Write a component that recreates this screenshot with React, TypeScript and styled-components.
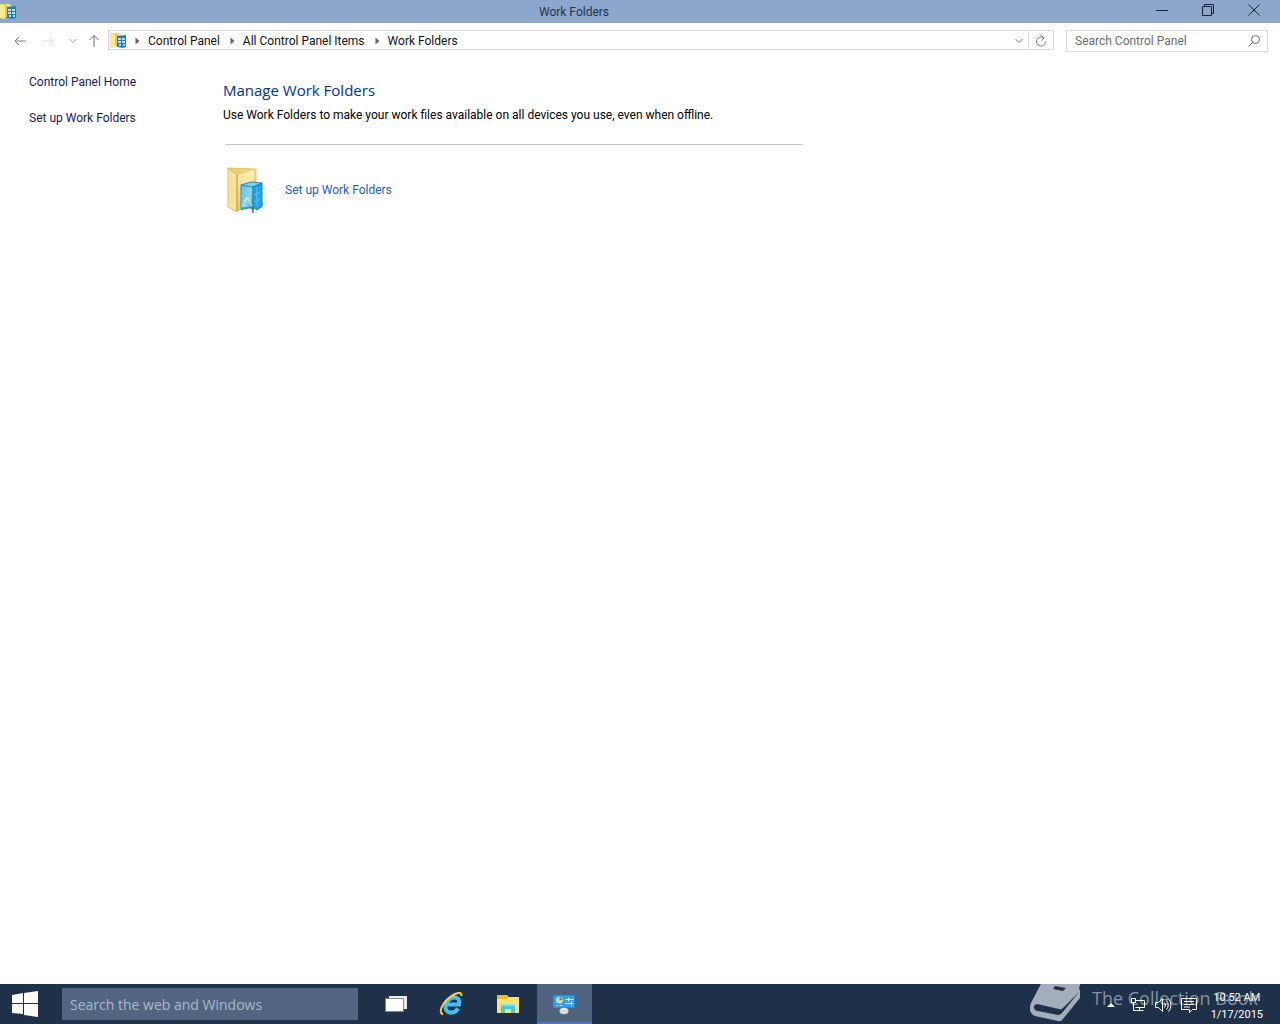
import React from "react";
import styled, { createGlobalStyle } from "styled-components";

const GlobalStyle = createGlobalStyle`
  * { box-sizing: border-box; }
  body { margin: 0; background: #fff; color: #111; font: 12px/16px Roboto, "Open Sans", sans-serif; }
  button, input { font: inherit; color: inherit; margin: 0; border-radius: 0; }
  button { padding: 0; border: 0; background: none; }
  svg { display: block; flex: none; }
`;

const display = `"Open Sans", "Noto Sans", sans-serif`;

const Desktop = styled.div`
  min-height: 100vh;
  display: flex;
  flex-direction: column;
`;

const TitleBar = styled.header`
  height: 23px;
  display: grid;
  grid-template-columns: 1fr auto 1fr;
  align-items: center;
  background: #8ca6cc;
  color: #24334d;
`;

const Title = styled.h1`
  margin: 0 132px 0 0;
  font-size: 12px;
  line-height: 16px;
  font-weight: 400;
`;

const WindowButtons = styled.div`
  display: flex;
  justify-content: flex-end;
  padding-right: 3px;
`;

const WindowButton = styled.button`
  width: 46px;
  height: 23px;
  display: grid;
  place-items: center;
  padding-bottom: 4px;
`;

const NavBar = styled.nav`
  display: flex;
  align-items: center;
  padding: 7px 12px 0 8px;
`;

const NavButton = styled.button<{ $width: number }>`
  width: ${(p) => p.$width}px;
  height: 22px;
  display: grid;
  place-items: center;
`;

const AddressBar = styled.div`
  flex: 1;
  height: 20px;
  display: flex;
  align-items: center;
  align-self: flex-start;
  margin: 0 12px 0 2px;
  padding-left: 1px;
  border: 1px solid #d9d9d9;
`;

const Crumbs = styled.ol`
  flex: 1;
  display: flex;
  align-items: center;
  margin: 0;
  padding: 2px 0 0 8px;
  list-style: none;
`;

const Crumb = styled.li`
  display: flex;
  align-items: center;
  gap: 8px;
  margin-right: 10px;
`;

const PlainLink = styled.a<{ $color: string }>`
  color: ${(p) => p.$color};
  text-decoration: none;
`;

const AddressButton = styled.button<{ $divided?: boolean }>`
  width: ${(p) => (p.$divided ? 25 : 18)}px;
  height: 18px;
  display: grid;
  place-items: center;
  padding-top: 2px;
  border-left: ${(p) => (p.$divided ? "1px solid #d9d9d9" : "0")};
`;

const SearchBox = styled.form`
  width: 202px;
  height: 22px;
  display: flex;
  align-items: center;
  padding: 0 7px 0 8px;
  border: 1px solid #d9d9d9;
`;

const SearchInput = styled.input`
  flex: 1;
  min-width: 0;
  padding: 0;
  border: 0;
  outline: 0;
  background: none;
  color: #6d6d6d;
  &::placeholder { color: #6d6d6d; opacity: 1; }
`;

const Body = styled.div`
  flex: 1;
  display: grid;
  grid-template-columns: 223px 1fr;
`;

const Sidebar = styled.aside`
  display: flex;
  flex-direction: column;
  gap: 20px;
  padding: 22px 0 0 29px;
`;

const Main = styled.main`
  padding: 28px 32px 0 0;
`;

const Heading = styled.h2`
  margin: 0;
  font-family: ${display};
  font-size: 15px;
  line-height: 20px;
  font-weight: 400;
  color: #003399;
`;

const Intro = styled.p`
  margin: 7px 0 0;
  color: #000;
`;

const Rule = styled.hr`
  max-width: 578px;
  margin: 21px 0 21px 2px;
  border: 0;
  border-top: 1px solid #c8c8c8;
`;

const Task = styled.div`
  display: flex;
  align-items: center;
  gap: 14px;
`;

const Taskbar = styled.footer`
  position: relative;
  overflow: hidden;
  height: 40px;
  display: flex;
  align-items: center;
  background: #1f3149;
  color: #fff;
`;

const StartButton = styled.button`
  width: 62px;
  height: 40px;
  padding-left: 12px;
`;

const WebSearch = styled.input`
  width: 296px;
  height: 32px;
  padding: 0 8px;
  border: 0;
  background: #526580;
  &&& { font-family: ${display}; font-size: 14px; }
  &::placeholder { color: #a9b8ca; opacity: 1; }
`;

const Apps = styled.div`
  flex: 1;
  display: flex;
  gap: 1px;
  margin-left: 11px;
`;

const AppButton = styled.button<{ $active?: boolean }>`
  width: 55px;
  height: 40px;
  display: grid;
  place-items: center;
  background: ${(p) => (p.$active ? "#4f637f" : "none")};
  border-bottom: 2px solid ${(p) => (p.$active ? "#4a78c8" : "transparent")};
  border-top: 2px solid transparent;
  padding-right: 2px;
`;

const Tray = styled.div`
  position: relative;
  display: flex;
  align-items: center;
  gap: 8px;
  padding-right: 17px;
`;

const TrayButton = styled.button<{ $wide?: boolean }>`
  height: 40px;
  padding: 2px ${(p) => (p.$wide ? 7 : 0)}px 0 0;
  display: grid;
  place-items: center;
`;

const Clock = styled.time`
  margin-left: 5px;
  padding-top: 4px;
  font-size: 11px;
  line-height: 17px;
  text-align: center;
`;

const Watermark = styled.div`
  position: absolute;
  right: 22px;
  bottom: 0;
  display: flex;
  align-items: center;
  gap: 11px;
  color: #8491a1;
  font-family: ${display};
  font-size: 18px;
  line-height: 24px;
  pointer-events: none;
  white-space: nowrap;
`;

const WatermarkText = styled.span`
  padding-bottom: 8px;
`;

const WorkFoldersSmall = () => (
  <svg width="17" height="17" viewBox="0 0 17 17" aria-hidden="true">
    <path d="M1 1h8l2 2v11H5l-2 2-2-2z" fill="#e6c35a" />
    <path d="M0 1l5 1v14l-5-1z" fill="#fbe993" />
    <path d="M6 2h4v3" fill="none" stroke="#fff2b8" />
    <path d="M7 4l9-1v12l-3 1-6-1z" fill="#1d7fcb" />
    <path d="M8 6h3v2H8zm4 0h3v2h-3zM8 9h3v2H8zm4 0h3v2h-3zM9 12h2v2H9zm4 0h2v2h-2z" fill="#b5e3ff" />
  </svg>
);

const WorkFoldersLarge = () => (
  <svg width="48" height="48" viewBox="0 0 48 48" aria-hidden="true">
    <defs>
      <linearGradient id="wf-front" x1="0" y1="0" x2="1" y2="0">
        <stop offset="0" stopColor="#e9c765" />
        <stop offset="1" stopColor="#f6dd8a" />
      </linearGradient>
      <linearGradient id="wf-back" x1="0" y1="0" x2="0" y2="1">
        <stop offset="0" stopColor="#fbf0bd" />
        <stop offset="1" stopColor="#e9c869" />
      </linearGradient>
      <linearGradient id="wf-glass" x1="0" y1="0" x2="1" y2="1">
        <stop offset="0" stopColor="#63c1ea" />
        <stop offset=".6" stopColor="#8fd3ee" />
        <stop offset="1" stopColor="#2ea3dc" />
      </linearGradient>
      <linearGradient id="wf-shade" x1="0" y1="0" x2="1" y2="0">
        <stop offset="0" stopColor="#888" stopOpacity=".7" />
        <stop offset="1" stopColor="#ccc" stopOpacity="0" />
      </linearGradient>
    </defs>
    <path d="M36 38l12-5-6 7-8 4z" fill="url(#wf-shade)" />
    <path d="M5 2l28 1v32l-19 10z" fill="url(#wf-front)" stroke="#dcbb60" strokeWidth=".8" />
    <path d="M14 9l17-6 1 1v31l-18 10z" fill="url(#wf-back)" stroke="#e4c46c" strokeWidth=".8" />
    <path d="M5 2v39l9 5V9z" fill="#f7e09a" stroke="#d9b557" strokeWidth=".8" />
    <path d="M14 9v36" stroke="#d0a541" />
    <path d="M18 19l10-3 11 1-9 4z" fill="#7ed0f2" stroke="#2791c8" />
    <path d="M18 19l12 2v23l-3-3-9 3z" fill="url(#wf-glass)" stroke="#2d93c9" />
    <path d="M30 21l9-4v23l-5 4-4-3z" fill="#22a4e3" stroke="#187fb9" />
    <path d="M19 41l5-9 5 8M21 35l3-4 4 4" fill="none" stroke="#c7eefa" />
    <path d="M19 42h11v5M30 40v7" fill="none" stroke="#167fb4" />
    <path d="M21 24l6 1M34 21v20M31 29l7-3M31 36l7-3" fill="none" stroke="#8bd6f5" strokeOpacity=".5" />
  </svg>
);

const Stroke = ({ d, color = "#777", w = 12, h = 12 }: { d: string; color?: string; w?: number; h?: number }) => (
  <svg width={w} height={h} viewBox={`0 0 ${w} ${h}`} fill="none" stroke={color} aria-hidden="true">
    <path d={d} />
  </svg>
);

const crumbs = ["Control Panel", "All Control Panel Items", "Work Folders"];

export default function App() {
  return (
    <>
      <GlobalStyle />
      <Desktop>
        <TitleBar>
          <WorkFoldersSmall />
          <Title>Work Folders</Title>
          <WindowButtons>
            <WindowButton aria-label="Minimize">
              <Stroke d="M0 6.5h12" color="#172235" />
            </WindowButton>
            <WindowButton aria-label="Restore">
              <Stroke d="M.5 2.5h9v9h-9zM2.500 2V.5h9v9H10" color="#172235" />
            </WindowButton>
            <WindowButton aria-label="Close">
              <Stroke d="M.5 .5l11 11M11.500 .5l-11 11" color="#172235" />
            </WindowButton>
          </WindowButtons>
        </TitleBar>

        <NavBar aria-label="Navigation">
          <NavButton $width={24} aria-label="Back"><Stroke d="M5 2L1 6l4 4M1 6h11" color="#808080" /></NavButton>
          <NavButton $width={32} aria-label="Forward"><Stroke d="M7 2l4 4-4 4M11 6H0" color="#dcdcdc" /></NavButton>
          <NavButton $width={18} aria-label="Recent locations"><Stroke w={8} h={6} d="M.5 1l3.500 3.500L7.500 1" color="#a0a0a0" /></NavButton>
          <NavButton $width={24} aria-label="Up"><Stroke d="M1.500 5L6 .5 10.500 5M6 .5V12" color="#707070" /></NavButton>
          <AddressBar>
            <WorkFoldersSmall />
            <Crumbs>
              {crumbs.map((name) => (
                <Crumb key={name}>
                  <svg width="5" height="8" viewBox="0 0 5 8" aria-hidden="true"><path d="M.5 .5L4.500 4l-4 3.500z" fill="#666" /></svg>
                  <PlainLink href="#" $color="#111">{name}</PlainLink>
                </Crumb>
              ))}
            </Crumbs>
            <AddressButton aria-label="Previous locations"><Stroke w={8} h={6} d="M.5 1L4 4.500 7.500 1" color="#707070" /></AddressButton>
            <AddressButton $divided aria-label="Refresh"><Stroke d="M8.500 2.800A4.500 4.500 0 1 0 10.500 6.500M5.500 .5l3.500 2.300-2.500 3" color="#808080" /></AddressButton>
          </AddressBar>
          <SearchBox role="search">
            <SearchInput aria-label="Search Control Panel" placeholder="Search Control Panel" />
            <Stroke d="M4.500 7.500L.5 11.500M11.500 4.500a4 4 0 1 1-8 0a4 4 0 1 1 8 0" color="#666" />
          </SearchBox>
        </NavBar>

        <Body>
          <Sidebar>
            <PlainLink href="#" $color="#151c55">Control Panel Home</PlainLink>
            <PlainLink href="#" $color="#151c55">Set up Work Folders</PlainLink>
          </Sidebar>
          <Main>
            <Heading>Manage Work Folders</Heading>
            <Intro>Use Work Folders to make your work files available on all devices you use, even when offline.</Intro>
            <Rule />
            <Task>
              <WorkFoldersLarge />
              <PlainLink href="#" $color="#1d5fb8">Set up Work Folders</PlainLink>
            </Task>
          </Main>
        </Body>

        <Taskbar>
          <StartButton aria-label="Start">
            <svg width="26" height="26" viewBox="0 0 26 26" fill="#fff" aria-hidden="true">
              <path d="M0 4l11-2v10H0zM12 2l14-2v12H12zM0 13h11v10L0 22zM12 13h14v13l-14-2z" />
            </svg>
          </StartButton>
          <WebSearch aria-label="Search the web and Windows" placeholder="Search the web and Windows" />
          <Apps>
            <AppButton aria-label="Task view">
              <svg width="22" height="18" viewBox="0 0 22 18" aria-hidden="true">
                <path d="M4 1h18v13H4z" fill="#e9ebee" />
                <path d="M.5 3.500h18v13H.5z" fill="#fff" stroke="#7c8592" />
                <path d="M1 4h17v12H1z" fill="#fff" />
              </svg>
            </AppButton>
            <AppButton aria-label="Internet Explorer">
              <svg width="26" height="24" viewBox="0 0 26 24" fill="none" aria-hidden="true">
                <path d="M19 16.500C17 20 14 21 11 20.500 7 20 5.500 16 7 12 9 7.500 12 5.500 15.500 5.500c4 0 5.500 3 4.500 7H8" stroke="#45bff0" strokeWidth="4" />
                <path d="M6 12C8 6.500 12 4 16 4" stroke="#b5edff" />
                <path d="M4 22.500C-1 21 3 11 11 5 17 .5 23-1 22.500 4" stroke="#f3cf4b" strokeWidth="2" />
              </svg>
            </AppButton>
            <AppButton aria-label="File Explorer">
              <svg width="22" height="20" viewBox="0 0 22 20" aria-hidden="true">
                <path d="M0 1h10l2 2h10v16H0z" fill="#f2b632" />
                <path d="M0 5h10l2-2h10v16H0z" fill="#fde272" />
                <path d="M4 10h14v9h-4v-4H8v4H4z" fill="#46c7dc" />
                <path d="M4 10h14v2H4z" fill="#83e2eb" />
              </svg>
            </AppButton>
            <AppButton $active aria-label="Control Panel">
              <svg width="24" height="22" viewBox="0 0 24 22" aria-hidden="true">
                <path d="M1 2h22v13H1z" fill="#3b9ee0" stroke="#2475b5" />
                <circle cx="7.500" cy="7" r="3" fill="#e8cf62" stroke="#d4eefa" />
                <path d="M7.500 7V4A3 3 0 0 1 10.500 7z" fill="#4d91bd" />
                <path d="M13.500 6.500h8M13.500 10.500h8M16.500 4.500v4M19.500 8.500v4M4 12.500h2M8 12.500h2" stroke="#d9f1ff" />
                <ellipse cx="12" cy="18" rx="4.500" ry="3.200" fill="#d6d8dc" />
                <path d="M9 17q3-2 5-1" fill="none" stroke="#fff" />
              </svg>
            </AppButton>
          </Apps>

          <Watermark>
            <svg width="51" height="44" viewBox="0 0 51 44" aria-hidden="true">
              <path d="M13 0h34q4 1 3 5l-1 3 1 3v7L33 39q-2 3-5 2L5 36Q-1 33 0 27q0-3 2-6z" fill="#a4aeba" />
              <path d="M7 24q-4 1-3 4 1 3 4 3l20 4q2 0 4-2L49 12 33 28q-2 2-4 1z" fill="#1f3149" />
              <path d="M25 6l11 2-3 3-10-2z" fill="#1f3149" />
            </svg>
            <WatermarkText>The Collection Book</WatermarkText>
          </Watermark>

          <Tray>
            <TrayButton $wide aria-label="Show hidden icons">
              <svg width="8" height="5" viewBox="0 0 8 5" aria-hidden="true"><path d="M4 0l4 4H0z" fill="#fff" /></svg>
            </TrayButton>
            <TrayButton aria-label="Network">
              <Stroke w={16} h={16} color="#fff" d="M5.500 3.500h9v7h-9M9.500 10.500v3M6.500 13.500h7M1.500 1.500h4v4h-4zM3.500 5.500v8h3" />
            </TrayButton>
            <TrayButton aria-label="Volume">
              <Stroke w={18} h={16} color="#fff" d="M1.500 5.500h3l4-4v13l-4-4h-3zM10.500 5.500q2 2.500 0 5M12.500 3.500q3.500 4.500 0 9M14.500 1.500q5 6.500 0 13" />
            </TrayButton>
            <TrayButton aria-label="Notifications">
              <Stroke w={18} h={18} color="#fff" d="M1.500 2.500h15v11h-4l-3 3v-3h-8zM4 5.500h10M4 8.500h10M4 11h6" />
            </TrayButton>
            <Clock>10:52 AM<br />1/17/2015</Clock>
          </Tray>
        </Taskbar>
      </Desktop>
    </>
  );
}
